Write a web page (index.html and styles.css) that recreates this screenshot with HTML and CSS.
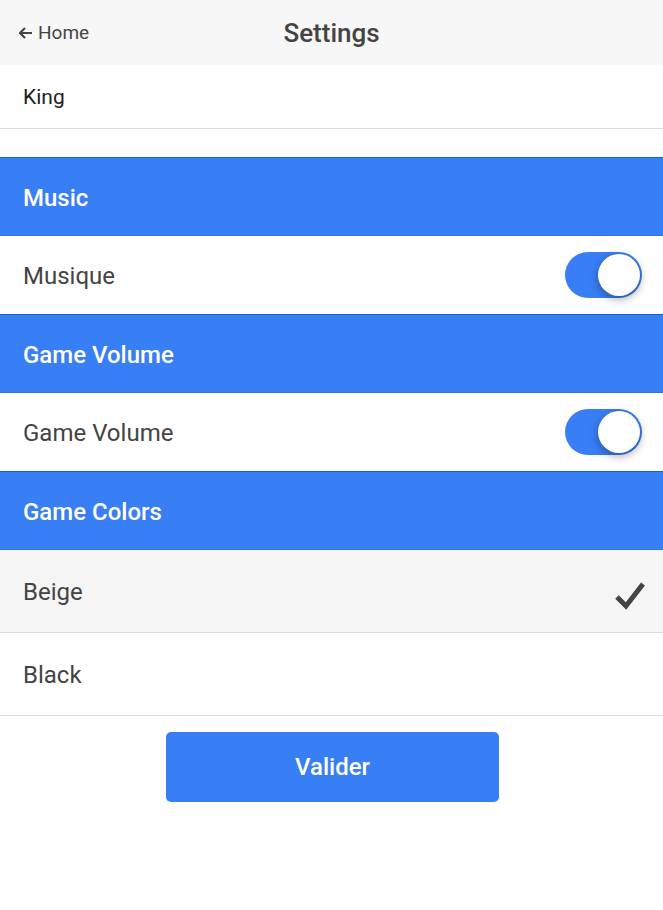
FILE: index.html
```html
<!DOCTYPE html>
<html>
<head>
<meta charset="utf-8">
<link rel="stylesheet" href="styles.css">
</head>
<body>
<header class="topbar">
  <a class="back"><svg class="back-icon" viewBox="0 0 14 12" width="14" height="12"><path d="M6 1 L1 6 L6 11 M1 6 H13" fill="none" stroke="#444" stroke-width="2.2"/></svg>Home</a>
  <h1 class="title">Settings</h1>
</header>
<div class="item item-king">King</div>
<div class="spacer"></div>
<div class="divider">Music</div>
<div class="item item-toggle"><span>Musique</span><span class="toggle"><span class="knob"></span></span></div>
<div class="divider">Game Volume</div>
<div class="item item-toggle"><span>Game Volume</span><span class="toggle"><span class="knob"></span></span></div>
<div class="divider">Game Colors</div>
<div class="item item-radio selected"><span>Beige</span><svg class="check" viewBox="0 0 32 30" width="32" height="30"><polyline points="3,16 12,25 29,3" fill="none" stroke="#444" stroke-width="5"/></svg></div>
<div class="item item-radio"><span>Black</span></div>
<div class="actions"><button class="btn">Valider</button></div>
</body>
</html>
```
FILE: styles.css
```css
* { box-sizing: border-box; }
body {
  margin: 0;
  font-family: Roboto, "Noto Sans", sans-serif;
  color: #444;
  background: #fff;
}
.topbar {
  height: 65px;
  background: #f7f7f7;
  display: flex;
  align-items: center;
  justify-content: center;
  position: relative;
}
.back {
  position: absolute;
  left: 19px;
  top: 21px;
  font-size: 19px;
  display: flex;
  align-items: center;
  gap: 5px;
  color: #444;
}
.back-icon { margin-top: 1px; }
.title {
  margin: 0;
  font-size: 26px;
  font-weight: 500;
  color: #444;
  margin-top: 1px;
}
.item {
  display: flex;
  align-items: center;
  justify-content: space-between;
  padding: 0 21px 0 23px;
  font-size: 24px;
  background: #fff;
}
.item-king {
  height: 64px;
  font-size: 21px;
  border-bottom: 1px solid #dedede;
  color: #222;
}
.spacer { height: 28px; }
.divider {
  height: 79px;
  background: #387ef5;
  border-top: 1px solid #0c60ee;
  border-bottom: 1px solid #2f74e8;
  color: #fff;
  font-size: 24px;
  font-weight: 500;
  display: flex;
  align-items: center;
  padding-left: 23px;
  padding-top: 2px;
}
.item-toggle { height: 78px; padding-top: 2px; }
.toggle {
  width: 77px;
  height: 46px;
  border-radius: 23px;
  background: #387ef5;
  display: flex;
  align-items: center;
  justify-content: flex-end;
  padding-right: 2px;
  margin-top: -2px;
}
.knob {
  width: 42px;
  height: 42px;
  border-radius: 50%;
  background: #fff;
  box-shadow: 0 3px 10px rgba(0,0,0,0.35);
}
.item-radio {
  height: 84px;
  border-top: 1px solid #dedede;
  border-bottom: 1px solid #dedede;
  margin-top: -1px;
  padding-right: 17px;
  padding-top: 2px;
}
.selected { background: #f5f5f5; border-top: none; margin-top: 0; height: 83px; }
.check { margin-top: 8px; }
.actions {
  display: flex;
  justify-content: center;
  padding-top: 16px;
  padding-left: 2px;
}
.btn {
  width: 333px;
  height: 70px;
  border: none;
  border-radius: 5px;
  background: #387ef5;
  color: #fff;
  font-family: Roboto, sans-serif;
  font-size: 24px;
  font-weight: 500;
}
```
